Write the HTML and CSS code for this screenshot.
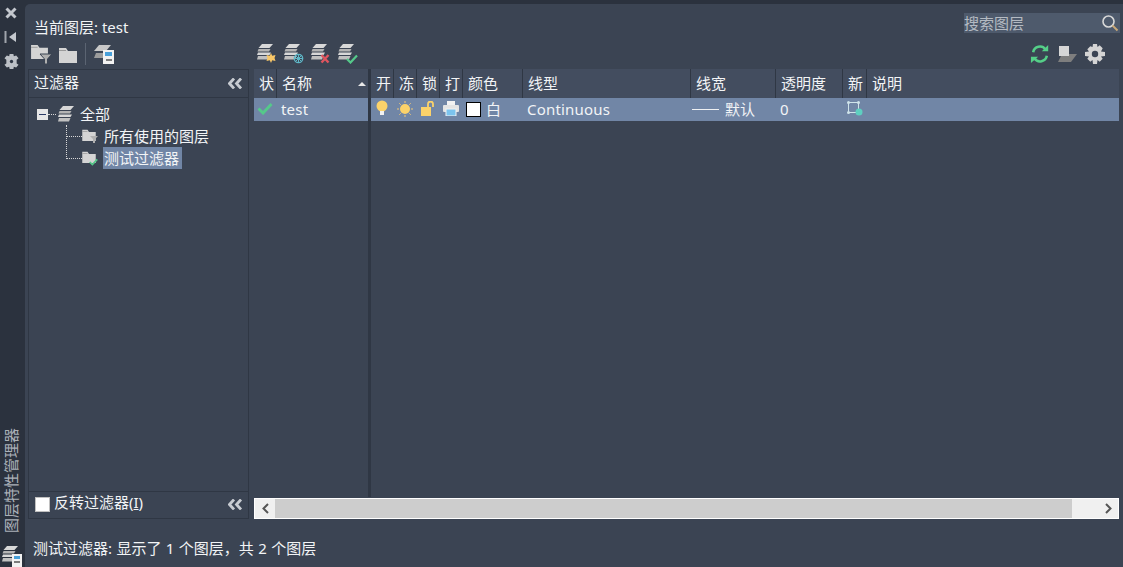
FILE: index.html
```html
<!DOCTYPE html>
<html lang="zh">
<head>
<meta charset="utf-8">
<title>图层特性管理器</title>
<link rel="stylesheet" href="styles.css">
</head>
<body>
<svg class="defs" width="0" height="0">
  <symbol id="stack" viewBox="0 0 16 16">
    <path d="M5 0h11l-3.500 4H1.500z" fill="#d8d8d8"/>
    <path d="M1.500 5h12l-1.500 2.500H.5z" fill="#b4b4b4"/>
    <path d="M1 8.500h13l-1.500 2.500H0z" fill="#d8d8d8"/>
    <path d="M1 12h11.500l-1.500 3.500H0z" fill="#c0c0c0"/>
  </symbol>
  <symbol id="folder" viewBox="0 0 18 16">
    <path d="M0 1h7l2 3h9v12H0z" fill="#d4d4d4"/>
    <path d="M0 4h7V3H0z" fill="#9a9a9a"/>
  </symbol>
  <symbol id="check" viewBox="0 0 12 10">
    <path d="M1 5l3.500 3.500L11 1.500" fill="none" stroke="#55c98a" stroke-width="2.200"/>
  </symbol>
  <symbol id="chev" viewBox="0 0 15 11">
    <path d="M6 .5L1.500 5.500 6 10.500M13 .5L8.500 5.500 13 10.500" fill="none" stroke="#c8ccd2" stroke-width="2.800"/>
  </symbol>
</svg>
<div class="app">
  <aside class="rail">
    <svg class="rail-icon" width="14" height="14" viewBox="0 0 14 14"><path d="M2.500 2.500l9 9M11.500 2.500l-9 9" stroke="#c4c8ce" stroke-width="3"/></svg>
    <svg class="rail-icon" width="14" height="14" viewBox="0 0 14 14"><path d="M1.500 1v12" stroke="#a0a5ac" stroke-width="2"/><path d="M12 2v10L5 7z" fill="#c4c8ce"/></svg>
    <svg class="rail-icon" width="15" height="15" viewBox="0 0 16 16"><path d="M6 0h4l.5 2.500 2.500-1 2.500 3L13.500 6v4l2 1.500-2.500 3-2.500-1L10 16H6l-.5-2.500-2.500 1-2.500-3L2.500 10V6l-2-1.500 2.500-3 2.500 1z" fill="#bcc0c6"/><circle cx="8" cy="8" r="1.800" fill="#2f3744"/></svg>
    <div class="rail-title">图层特性管理器</div>
    <svg class="rail-bottom" width="22" height="22" viewBox="0 0 22 22"><use href="#stack" width="16" height="16" y="1"/><rect x="10" y="9" width="10" height="13" fill="#f2f2f2"/><rect x="12" y="11" width="6" height="3" fill="#4aa0d8"/><path d="M12 17h6" stroke="#555" stroke-width="1.500"/></svg>
  </aside>
  <main class="panel">
    <header class="head">
      <div class="current">当前图层: test</div>
      <div class="search">
        <span>搜索图层</span>
        <svg width="18" height="18" viewBox="0 0 18 18"><circle cx="7.500" cy="7.500" r="5.500" fill="none" stroke="#d8d8d8" stroke-width="1.600"/><path d="M11.500 11.500l5 5" stroke="#c8a878" stroke-width="2"/></svg>
      </div>
    </header>
    <div class="tools">
      <div class="tools-left">
        <svg class="ic" width="22" height="20" viewBox="0 0 22 20"><use href="#folder" width="17" height="15" y="0"/><path d="M9 10h12l-4.500 5v5h-3v-5z" fill="#b0b0b0" stroke="#3b4453"/></svg>
        <svg class="ic" width="19" height="17" viewBox="0 0 19 17"><use href="#folder" width="18" height="16" y="1"/></svg>
        <span class="sep"></span>
        <svg class="ic" width="22" height="20" viewBox="0 0 22 20"><path d="M6 1h12l-5 6H1z" fill="#c8c8c8"/><path d="M3 9h9v5H1z" fill="#9c9c9c"/><rect x="10" y="6" width="11" height="14" fill="#f2f2f2"/><rect x="12" y="8" width="7" height="4" fill="#48a0da"/><path d="M13 16h6" stroke="#555" stroke-width="1.500"/></svg>
      </div>
      <div class="tools-mid">
        <svg class="ic" width="20" height="20" viewBox="0 0 20 20"><use href="#stack" width="16" height="16"/><path d="M14 9l1.200 2.800L18.500 11l-1 3 1 3-3.300-.8L14 19l-1.200-2.800-3.300.8 1-3-1-3 3.300.8z" fill="#f8c768"/></svg>
        <svg class="ic" width="20" height="20" viewBox="0 0 20 20"><use href="#stack" width="16" height="16"/><circle cx="14.500" cy="14.500" r="4.200" fill="none" stroke="#5fb8c8" stroke-width="1.300"/><path d="M14.500 10v9M10 14.500h9M11.500 11.500l6 6M17.500 11.500l-6 6" stroke="#5fb8c8"/></svg>
        <svg class="ic" width="20" height="20" viewBox="0 0 20 20"><use href="#stack" width="16" height="16"/><path d="M10.500 11l7 7.500M17.500 11l-7 7.500" stroke="#e0555f" stroke-width="2.400"/></svg>
        <svg class="ic" width="20" height="20" viewBox="0 0 20 20"><use href="#stack" width="16" height="16"/><use href="#check" x="8" y="10" width="12" height="10"/></svg>
      </div>
      <div class="tools-right">
        <svg class="ic" width="20" height="20" viewBox="0 0 22 20"><path d="M3.500 8A7.500 7.500 0 0 1 17 5" fill="none" stroke="#55cf88" stroke-width="2.800"/><path d="M13 7h7V0z" fill="#55cf88"/><path d="M18.500 12A7.500 7.500 0 0 1 5 15" fill="none" stroke="#55cf88" stroke-width="2.800"/><path d="M9 13H1v7z" fill="#55cf88"/></svg>
        <svg class="ic" width="19" height="18" viewBox="0 0 19 18"><path d="M4 9h15l-6 8H0z" fill="#7e7e7e"/><rect x="1" y="1" width="10" height="10" fill="#d6d6d6"/></svg>
        <svg class="ic" width="20" height="20" viewBox="0 0 20 20"><path d="M8 0h4l.5 3 2.200-1.700 3 3L16 7.500l4 .5v4l-4 .5 1.700 2.200-3 3L12.500 16l-.5 4H8l-.5-4-2.200 1.700-3-3L4 12.500 0 12V8l4-.5-1.700-2.200 3-3L7.500 3z" fill="#d4d4d4"/><circle cx="10" cy="10" r="3.200" fill="#3b4453"/></svg>
      </div>
    </div>
    <div class="body">
      <section class="filters">
        <div class="filters-title"><span>过滤器</span><svg class="ic" width="15" height="11"><use href="#chev"/></svg></div>
        <div class="tree">
          <div class="node root">
            <span class="minus"></span><span class="dots-h short"></span>
            <svg class="ic" width="16" height="16" viewBox="0 0 16 16"><use href="#stack" width="16" height="16"/></svg>
            <span class="label">全部</span>
          </div>
          <div class="branches">
            <div class="node">
              <span class="dots-h"></span>
              <svg class="ic" width="16" height="15" viewBox="0 0 16 15"><use href="#folder" width="14" height="12"/><path d="M8 7h8l-3 3v4h-2v-4z" fill="#b0b0b0"/></svg>
              <span class="label">所有使用的图层</span>
            </div>
            <div class="node">
              <span class="dots-h"></span>
              <svg class="ic" width="16" height="15" viewBox="0 0 16 15"><use href="#folder" width="14" height="12"/><use href="#check" x="7" y="7" width="9" height="8"/></svg>
              <span class="label selected">测试过滤器</span>
            </div>
          </div>
        </div>
        <div class="filters-foot">
          <label class="invert"><span class="box"></span><span class="invert-text">反转过滤器(<u>I</u>)</span></label>
          <svg class="ic" width="15" height="11"><use href="#chev"/></svg>
        </div>
      </section>
      <section class="table-wrap">
        <div class="tables">
          <div class="names">
            <div class="hrow">
              <div class="c c-st">状</div>
              <div class="c c-name">名称<span class="sort"></span></div>
            </div>
            <div class="drow">
              <div class="c c-st ico"><svg width="16" height="13" viewBox="0 0 12 10"><use href="#check" width="12" height="10"/></svg></div>
              <div class="c c-name val">test</div>
            </div>
          </div>
          <div class="grid">
            <div class="hrow">
              <div class="c w-s">开</div><div class="c w-s">冻</div><div class="c w-s">锁</div><div class="c w-s">打</div>
              <div class="c w-color">颜色</div><div class="c w-type">线型</div><div class="c w-width">线宽</div><div class="c w-trans">透明度</div><div class="c w-new">新</div><div class="c w-desc">说明</div>
            </div>
            <div class="drow">
              <div class="c w-s ico"><svg width="14" height="17" viewBox="0 0 14 17"><circle cx="7" cy="6" r="5.500" fill="#fbd26a"/><rect x="5" y="11" width="4" height="4" fill="#f2f2f2"/></svg></div>
              <div class="c w-s ico"><svg width="16" height="16" viewBox="0 0 16 16"><circle cx="8" cy="8" r="5" fill="#fbd26a"/><path d="M8 0v2M8 14v2M0 8h2M14 8h2M2.300 2.300l1.400 1.400M12.300 12.300l1.400 1.400M13.700 2.300l-1.400 1.400M3.700 12.300l-1.400 1.400" stroke="#f0c878"/></svg></div>
              <div class="c w-s ico"><svg width="15" height="15" viewBox="0 0 15 15"><rect x="0" y="6" width="10" height="9" fill="#fbd26a"/><path d="M7 6V3a2.500 2.500 0 0 1 5 0v3" fill="none" stroke="#fbd26a" stroke-width="1.800"/></svg></div>
              <div class="c w-s ico"><svg width="16" height="15" viewBox="0 0 16 15"><rect x="4" y="0" width="8" height="4" fill="#f2f2f2"/><rect x="0" y="4" width="16" height="7" rx="1" fill="#e4e4e4"/><rect x="3" y="8" width="10" height="7" fill="#7cc4ee" stroke="#f2f2f2"/></svg></div>
              <div class="c w-color val"><span class="swatch"></span>白</div>
              <div class="c w-type val">Continuous</div>
              <div class="c w-width val"><span class="line"></span>默认</div>
              <div class="c w-trans val">0</div>
              <div class="c w-new ico"><svg width="16" height="15" viewBox="0 0 16 15"><rect x="1.500" y="1.500" width="10" height="10" fill="none" stroke="#cfe4ea"/><circle cx="1.500" cy="1.500" r="1.500" fill="#cfe4ea"/><circle cx="11.500" cy="1.500" r="1.500" fill="#cfe4ea"/><circle cx="1.500" cy="11.500" r="1.500" fill="#cfe4ea"/><circle cx="12" cy="11" r="3.500" fill="#5ecfc0"/></svg></div>
              <div class="c w-desc"></div>
            </div>
          </div>
        </div>
        <div class="scrollbar">
          <span class="arrow"><svg width="9" height="11" viewBox="0 0 9 11"><path d="M7 1L2.500 5.500 7 10" fill="none" stroke="#555" stroke-width="2"/></svg></span>
          <span class="thumb"></span>
          <span class="arrow"><svg width="9" height="11" viewBox="0 0 9 11"><path d="M2 1l4.500 4.500L2 10" fill="none" stroke="#555" stroke-width="2"/></svg></span>
        </div>
      </section>
    </div>
    <footer class="status">测试过滤器: 显示了 1 个图层，共 2 个图层</footer>
  </main>
</div>
</body>
</html>
```
FILE: styles.css
```css
* { box-sizing: border-box; }
html, body { margin: 0; padding: 0; }
body {
  width: 1123px;
  height: 567px;
  overflow: hidden;
  background: #2b323e;
  color: #f2f4f6;
  font: 15px/20px "Noto Sans", "Noto Sans CJK SC", sans-serif;
}
.defs { position: absolute; }
.app { display: flex; height: 567px; }
.rail {
  width: 25px;
  flex: none;
  display: flex;
  flex-direction: column;
  align-items: center;
  padding: 6px 3px 0 0;
  gap: 10px;
  overflow: hidden;
}
.rail-icon { display: block; flex: none; }
.rail-title {
  margin: auto 1px 0 0;
  writing-mode: vertical-rl;
  text-orientation: sideways;
  transform: rotate(180deg);
  font-size: 15px;
  line-height: 20px;
  color: #aab0b8;
  white-space: nowrap;
}
.rail-bottom { flex: none; margin: 2px 0 0 3px; height: 22px; }
.panel {
  flex: 1;
  margin-top: 4px;
  background: #3b4453;
  border-top-left-radius: 5px;
  display: flex;
  flex-direction: column;
  min-width: 0;
}
.head {
  height: 29px;
  flex: none;
  display: flex;
  justify-content: space-between;
  padding: 9px 3px 0 9px;
}
.current { line-height: 28px; }
.search {
  width: 156px;
  height: 20px;
  background: #4e5a6c;
  display: flex;
  justify-content: space-between;
  align-items: center;
  padding-right: 1px;
  color: #b4bac2;
}
.tools {
  height: 36px;
  flex: none;
  display: flex;
  align-items: center;
  padding: 6px 0 0 6px;
}
.ic { display: block; flex: none; }
.tools-left { display: flex; align-items: center; gap: 6px; width: 226px; }
.sep { width: 1px; height: 22px; background: #5b6472; margin: 0 1px 0 1px; }
.tools-mid { display: flex; align-items: center; gap: 7px; }
.tools-right { margin-left: auto; margin-right: 18px; display: flex; align-items: center; gap: 8px; }
.body { flex: 1; display: flex; min-height: 0; padding-left: 3px; }
.filters {
  width: 221px;
  height: 450px;
  flex: none;
  display: flex;
  flex-direction: column;
  border: 1px solid #2f3744;
}
.filters-title {
  height: 28px;
  flex: none;
  display: flex;
  justify-content: space-between;
  align-items: center;
  padding: 0 5px 3px 5px;
  border-bottom: 1px solid #2f3744;
  line-height: 18px;
}
.filters-title .ic { margin-top: 2px; }
.tree { flex: 1; padding-top: 5px; }
.node { display: flex; align-items: center; height: 22px; }
.root { padding-left: 8px; }
.minus {
  width: 11px;
  height: 11px;
  background: #e6e6e6;
  display: flex;
  flex: none;
}
.minus::after { content: ""; width: 7px; height: 1px; background: #2b3a66; margin: 5px 2px; }
.dots-h { width: 15px; border-top: 1px dotted #d8d8d8; flex: none; }
.dots-h.short { width: 8px; margin-right: 2px; }
.label { margin-left: 5px; padding: 0 3px 0 1px; line-height: 22px; }
.branches {
  margin-left: 37px;
  border-left: 1px dotted #d8d8d8;
  height: 34px;
}
.selected { background: #7186a6; }
.filters-foot {
  height: 27px;
  flex: none;
  display: flex;
  justify-content: space-between;
  align-items: center;
  padding: 0 5px 2px 6px;
  border-top: 1px solid #2f3744;
}
.invert { display: flex; align-items: center; gap: 4px; }
.invert-text { line-height: 17px; padding-bottom: 3px; }
.box { width: 15px; height: 15px; background: #fff; border: 1px solid #c0c0c0; flex: none; }
.table-wrap {
  flex: 1;
  display: flex;
  flex-direction: column;
  padding: 0 4px 0 5px;
  min-width: 0;
  height: 450px;
}
.tables { flex: 1; display: flex; min-height: 0; margin-bottom: 1px; }
.names { width: 117px; flex: none; border-right: 3px solid #2f3744; }
.grid { flex: 1; min-width: 0; }
.hrow { display: flex; height: 29px; background: #434d5f; }
.hrow .c { border-right: 1px solid #2f3744; line-height: 29px; padding-left: 5px; }
.hrow .c:last-child { border-right: 0; }
.drow { display: flex; height: 23px; background: #7186a6; align-items: center; line-height: 21px; }
.c { flex: none; height: 100%; white-space: nowrap; }
.drow .c { display: flex; align-items: center; }
.c-st { width: 23px; }
.drow .ico { justify-content: center; padding: 0 1px 2px 0; }
.c-name { flex: 1; position: relative; }
.sort {
  position: absolute;
  right: 2px;
  top: 13px;
  border: 4px solid transparent;
  border-top: 0;
  border-bottom: 4px solid #e8e8e8;
}
.w-s { width: 23px; }
.w-color { width: 60px; }
.w-type { width: 168px; }
.w-width { width: 85px; }
.w-trans { width: 67px; }
.w-new { width: 24px; }
.w-desc { flex: 1; }
.drow .val { padding-left: 4px; letter-spacing: .2px; }
.drow .w-color { padding-left: 3px; }
.drow .w-width { padding-left: 1px; letter-spacing: 0; }
.swatch { width: 15px; height: 15px; background: #fff; border: 1px solid #000; margin-right: 5px; flex: none; }
.line { width: 27px; border-top: 1px solid #eef0f2; margin-right: 6px; flex: none; }
.scrollbar {
  height: 21px;
  flex: none;
  display: flex;
  background: #f0f0f0;
  border: 1px solid #fff;
}
.arrow { width: 20px; flex: none; display: flex; align-items: center; justify-content: center; }
.thumb { flex: 1; background: #cdcdcd; margin-right: 26px; }
.arrow:last-child { margin-left: -26px; width: 46px; justify-content: flex-end; padding-right: 5px; }
.status { flex: none; height: 48px; padding: 19px 0 0 8px; word-spacing: .5px; }
```
